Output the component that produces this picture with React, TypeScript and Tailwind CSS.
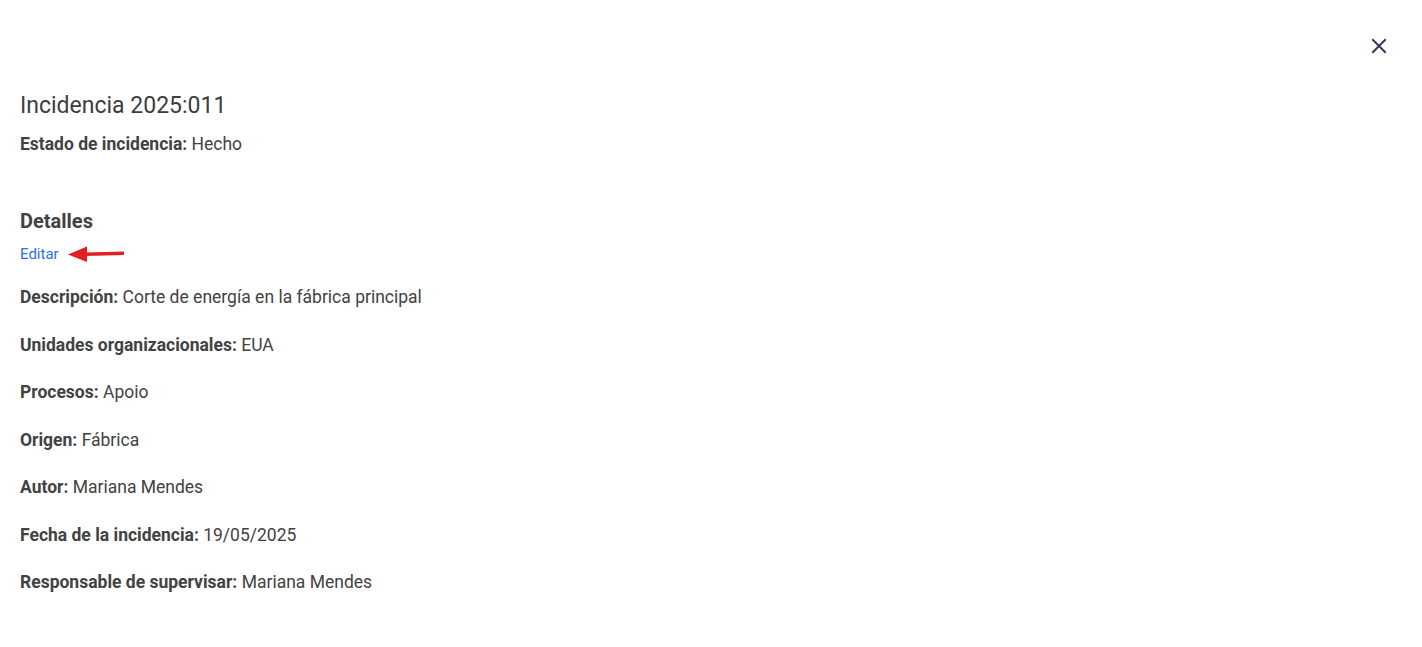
import React from 'react';

const fields = [
  { label: 'Descripción:', value: 'Corte de energía en la fábrica principal' },
  { label: 'Unidades organizacionales:', value: 'EUA' },
  { label: 'Procesos:', value: 'Apoio' },
  { label: 'Origen:', value: 'Fábrica' },
  { label: 'Autor:', value: 'Mariana Mendes' },
  { label: 'Fecha de la incidencia:', value: '19/05/2025' },
  { label: 'Responsable de supervisar:', value: 'Mariana Mendes' },
];

export default function App() {
  return (
    <div className="min-h-[647px] bg-white text-[#424242] font-['Roboto',sans-serif]">
      <div className="flex justify-end pt-[38px] pr-[35px]">
        <button className="w-4 h-4 flex items-center justify-center text-[#2d3b5c]">
          <svg width="16" height="16" viewBox="0 0 16 16" fill="none" stroke="currentColor" strokeWidth="2" strokeLinecap="square">
            <path d="M2 2 L14 14 M14 2 L2 14" />
          </svg>
        </button>
      </div>

      <div className="px-5 pt-[38px]">
        <h1 className="text-[23px] leading-7 font-normal text-[#3d3d3d]">Incidencia 2025:011</h1>
        <p className="mt-3 text-[17.5px] leading-6">
          <span className="font-bold">Estado de incidencia:</span> Hecho
        </p>

        <h2 className="mt-[52px] text-[20px] leading-[26px] font-bold">Detalles</h2>
        <div className="mt-[10px] flex items-center h-5">
          <a className="text-[15px] leading-5 text-[#2f6fe4] cursor-pointer">Editar</a>
          <svg className="ml-[9px]" width="58" height="18" viewBox="0 0 58 18">
            <path d="M17 9.2 L56 8.2" stroke="#e31e24" strokeWidth="3.5" strokeLinecap="butt" />
            <path d="M0 9.5 L19 1.5 L19 17 Z" fill="#e31e24" />
          </svg>
        </div>

        <div className="mt-[21px] flex flex-col gap-[23.5px]">
          {fields.map((f) => (
            <p key={f.label} className="text-[17.5px] leading-6">
              <span className="font-bold">{f.label}</span> {f.value}
            </p>
          ))}
        </div>
      </div>
    </div>
  );
}
